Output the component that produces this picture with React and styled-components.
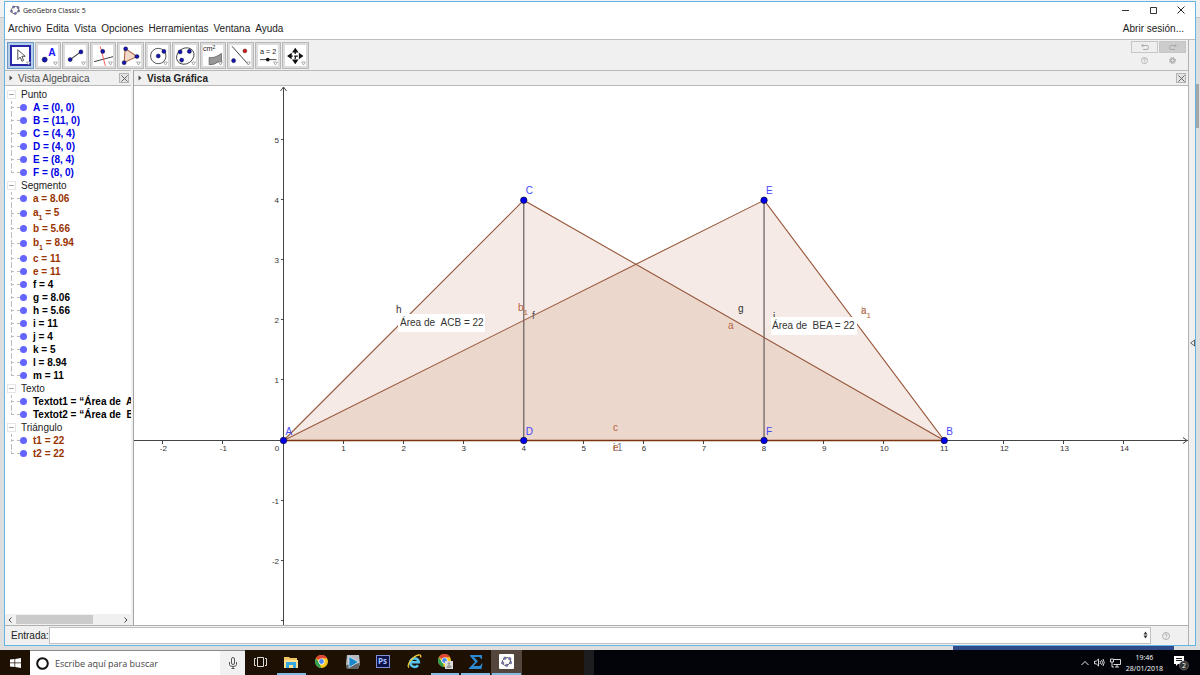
import { useState } from 'react';
import styled, { createGlobalStyle } from 'styled-components';

const sans = '"Liberation Sans", Arial, sans-serif';
const ui = '"Open Sans", "Noto Sans", sans-serif';
const BROWN = '#993300';
const BLUE = '#0000e6';

const GlobalStyle = createGlobalStyle`
  * { box-sizing: border-box; }
  body { margin: 0; font-family: ${sans}; font-size: 10px; color: #222; }
  button, input { font: inherit; color: inherit; }
  button { padding: 0; border: 0; background: none; cursor: pointer; }
  svg { display: block; }
  ul { list-style: none; margin: 0; padding: 0; }
`;

const groups = [
  { name: 'Punto', color: BLUE, items: ['A = (0, 0)', 'B = (11, 0)', 'C = (4, 4)', 'D = (4, 0)', 'E = (8, 4)', 'F = (8, 0)'] },
  {
    name: 'Segmento',
    color: '#000',
    items: [
      { text: 'a = 8.06', color: BROWN },
      { text: 'a', sub: '1', rest: ' = 5', color: BROWN },
      { text: 'b = 5.66', color: BROWN },
      { text: 'b', sub: '1', rest: ' = 8.94', color: BROWN },
      { text: 'c = 11', color: BROWN },
      { text: 'e = 11', color: BROWN },
      'f = 4', 'g = 8.06', 'h = 5.66', 'i = 11', 'j = 4', 'k = 5', 'l = 8.94', 'm = 11',
    ],
  },
  { name: 'Texto', color: '#000', items: ['Textot1 = “Área de  ACB = 22”', 'Textot2 = “Área de  BEA = 22”'] },
  { name: 'Triángulo', color: BROWN, items: ['t1 = 22', 't2 = 22'] },
];

const dot = (x, y, r = 2, fill = '#1414b4') => <circle cx={x} cy={y} r={r} fill={fill} stroke="#111" strokeWidth=".4" />;

const tools = [
  { name: 'Elige y mueve', icon: <path d="M7 3v12l3-3 2 5 2-1-2-5h4z" fill="#fff" stroke="#333" strokeWidth="1" /> },
  { name: 'Punto', icon: <>{dot(6.5, 14, 2.5)}<text x="10" y="10.5" fontSize="10" fontWeight="bold" fill="#1414ff">A</text></> },
  { name: 'Recta', icon: <><path d="M5 14L16 6" stroke="#333" />{dot(5, 14)}{dot(15.5, 6.5)}</> },
  { name: 'Perpendicular', icon: <><path d="M1 16l19-5" stroke="#333" strokeWidth=".9" /><path d="M7 1l5 19" stroke="#ff5050" strokeWidth=".9" />{dot(9.5, 6)}</> },
  { name: 'Polígono', icon: <><path d="M5 3l11.5 8L4 17z" fill="#f2d8c8" stroke="#a86242" />{dot(5.5, 3.5)}{dot(16.5, 11)}{dot(4, 17)}</> },
  { name: 'Circunferencia', icon: <><circle cx="10" cy="10.5" r="7.5" fill="none" stroke="#333" strokeWidth=".8" />{dot(10, 10.5)}{dot(15.5, 6)}</> },
  { name: 'Cónica', icon: <><ellipse cx="10" cy="10.5" rx="9" ry="7.5" transform="rotate(-35 10 10.5)" fill="none" stroke="#333" strokeWidth=".8" />{dot(5, 6.5)}{dot(14, 6)}{dot(6.5, 14.5)}</> },
  { name: 'Área', icon: <><path d="M6 19v-7q5 1 12-4v10l-3-2q-3 3-9 3z" fill="#999" stroke="#555" strokeWidth=".7" /><text x="0" y="6" fontSize="7" fill="#222">cm<tspan dy="-2" fontSize="5">2</tspan></text></> },
  { name: 'Simetría', icon: <><path d="M2 1l16 18" stroke="#333" strokeWidth=".9" />{dot(14.5, 5.5, 1.9, '#e01010')}{dot(3.5, 15)}</> },
  { name: 'Deslizador', icon: <><text x="2" y="9" fontSize="7" fill="#222">a = 2</text><path d="M2 14h16" stroke="#555" /><circle cx="9.5" cy="14" r="1.8" fill="#111" /></> },
  { name: 'Desplaza', icon: <><path d="M10 5v11M4 10.5h12" stroke="#111" strokeWidth="1.2" strokeDasharray="3.5 1.5" /><path d="M10 2.500l-3.200 4.500h6.400zM10 18.500l-3.200-4.500h6.400zM2 10.500l4.500-3.200v6.400zM18 10.500l-4.500-3.200v6.400z" fill="#111" /></> },
];

const Page = styled.div`
  display: flex;
  flex-direction: column;
  height: 100vh;
  overflow: hidden;
`;

const Desktop = styled.div`
  position: relative;
  display: flex;
  flex: 1;
  min-height: 0;
  padding: 1px 4px 4px;
  background: linear-gradient(#f1f1f1 17px, #c4c4c4 17px, #c4c4c4 18px, #dedede 18px);
`;

const BackScroll = styled.span`
  position: absolute;
  right: 1px;
  top: 84px;
  width: 3px;
  height: 44px;
  background: #a6a6a6;
`;

const BackPage = styled.span`
  position: absolute;
  right: 26px;
  bottom: 0;
  width: 221px;
  height: 5px;
  background: #304b88;
`;

const Window = styled.div`
  position: relative;
  display: flex;
  flex-direction: column;
  flex: 1;
  min-width: 0;
  border: 1px solid #64b4e4;
  background: #fff;
`;

const TitleBar = styled.header`
  display: flex;
  align-items: center;
  height: 16px;
  padding: 0 10px 0 5px;
  gap: 3px;
  font: 7px ${ui};
  color: #222;
`;

const WindowControls = styled.div`
  display: flex;
  gap: 19px;
  margin-left: auto;
`;

const MenuBar = styled.nav`
  display: flex;
  align-items: center;
  height: 21px;
  padding: 0 11px 0 3px;
  gap: 5px;
`;

const MenuLink = styled.a`
  color: #222;
  text-decoration: none;
  margin-left: ${(p) => (p.$end ? 'auto' : '0')};
`;

const Body = styled.div`
  display: flex;
  flex: 1;
  min-height: 0;
  border-top: 1px solid #bcbcbc;
`;

const Main = styled.main`
  display: flex;
  flex-direction: column;
  flex: 1;
  min-width: 0;
`;

const Strip = styled.aside`
  display: flex;
  align-items: center;
  justify-content: center;
  width: 7px;
  border-left: 1px solid #b0b0b0;
  background: #f0f0f0;
`;

const ToolBar = styled.div`
  display: flex;
  justify-content: space-between;
  height: 30px;
  padding: 1px 2px 0;
  background: #f0f0f0;
`;

const Tools = styled.div`
  display: grid;
  grid-template-columns: repeat(11, 1fr);
  gap: 1px;
  width: 302px;
  height: 27px;
  margin-top: 1px;
`;

const ToolButton = styled.button`
  position: relative;
  padding: 2px;
  border: 1px solid ${(p) => (p.$active ? '#6a96c8' : '#b8b8b8')};
  background: ${(p) => (p.$active ? '#b4cfea' : '#dcdcdc')};
  > svg {
    width: 100%;
    height: 100%;
    background: #fff;
    border: ${(p) => (p.$active ? '2px solid #2828a8' : '0')};
  }
`;

const Corner = styled.i`
  position: absolute;
  right: 2px;
  bottom: 2px;
  svg { width: 5px; height: 5px; }
`;

const History = styled.div`
  display: grid;
  grid-template-columns: 27px 27px;
  grid-template-rows: 12px 12px;
  gap: 1px;
  justify-items: center;
  align-items: center;
  align-content: start;
`;

const HistoryButton = styled.button`
  display: grid;
  place-items: center;
  width: 100%;
  height: 100%;
  border: 1px solid #c6c6c6;
  background: ${(p) => (p.$dark ? '#cccccc' : '#eeeeee')};
`;

const Views = styled.div`
  display: flex;
  flex: 1;
  min-height: 0;
`;

const Panel = styled.section`
  display: flex;
  flex-direction: column;
  flex: ${(p) => (p.$width ? `0 0 ${p.$width}` : '1')};
  min-width: 0;
  border-left: ${(p) => (p.$width ? '0' : '1px solid #a4a4a4')};
  border-right: ${(p) => (p.$width ? '2px solid #f0f0f0' : '0')};
`;

const PanelHead = styled.div`
  display: flex;
  align-items: center;
  gap: 5px;
  height: 16px;
  padding: 0 2px 0 4px;
  border-top: 1px solid #b8b8b8;
  border-bottom: 1px solid #b8b8b8;
  background: #f0f0f0;
  color: ${(p) => (p.$active ? '#222' : '#505050')};
  font-weight: ${(p) => (p.$active ? 'bold' : 'normal')};
`;

const CloseButton = styled.button`
  display: grid;
  place-items: center;
  width: 10px;
  height: 10px;
  margin-left: auto;
  border: 1px solid #b4b4b4;
  background: #e4e4e4;
`;

const Tree = styled.div`
  flex: 1;
  min-height: 0;
  padding-top: 2px;
  overflow: hidden;
`;

const GroupHead = styled.div`
  display: flex;
  align-items: center;
  gap: 5px;
  height: 13px;
  padding-left: 2px;
`;

const Toggle = styled.button`
  display: grid;
  place-items: center;
  width: 9px;
  height: 9px;
  border: 1px solid #e6e6e6;
  background: #fff;
  &::before {
    content: '';
    width: 5px;
    height: 1px;
    background: #aaa;
  }
`;

const Item = styled.li`
  position: relative;
  display: flex;
  align-items: center;
  height: ${(p) => (p.$tall ? '17px' : '13px')};
  margin-left: 6px;
  color: ${(p) => p.$color};
  font-weight: bold;
  white-space: pre;
  &::before {
    content: '';
    position: absolute;
    left: 0;
    top: 0;
    height: 100%;
    border-left: 1px dashed #bbb;
  }
  &:last-child::before { height: 50%; }
`;

const Branch = styled.span`
  flex: none;
  width: 9px;
  border-top: 1px dashed #bbb;
`;

const Marker = styled.button`
  flex: none;
  width: 7px;
  height: 7px;
  margin-right: 6px;
  border-radius: 50%;
  background: #6464ff;
`;

const Sub = styled.sub`
  font-size: 7px;
  line-height: 1;
  vertical-align: -4px;
`;

const ScrollBar = styled.div`
  display: flex;
  align-items: center;
  justify-content: space-between;
  height: 11px;
  padding: 0 3px;
  background: #f0f0f0;
`;

const Thumb = styled.span`
  width: 77px;
  height: 9px;
  margin: 0 auto 0 4px;
  background: #cbcbcb;
`;

const Graph = styled.svg`
  flex: 1;
  width: 100%;
  min-height: 0;
  background: #fff;
  font-family: ${sans};
`;

const InputBar = styled.form`
  display: flex;
  align-items: center;
  height: 20px;
  padding: 0 18px 0 6px;
  border-top: 1px solid #b0b0b0;
  background: #f0f0f0;
`;

const Field = styled.div`
  position: relative;
  display: flex;
  flex: 1;
  margin-right: 11px;
  input {
    flex: 1;
    height: 17px;
    padding: 0 16px 0 3px;
    border: 1px solid #c0c0c0;
    background: #fff;
    outline: none;
  }
  button {
    position: absolute;
    right: 3px;
    top: 4px;
  }
`;

const TaskBar = styled.footer`
  display: flex;
  height: 25px;
  background: #02040a;
  color: #fff;
  font-family: ${ui};
`;

const StartButton = styled.button`
  display: grid;
  place-items: center;
  width: 30px;
  background: #1e1002;
`;

const Search = styled.label`
  display: flex;
  align-items: center;
  gap: 6px;
  width: 190px;
  padding-left: 6px;
  border-top: 1px solid #888;
  background: #fff;
  input {
    flex: 1;
    min-width: 0;
    padding: 0;
    border: 0;
    background: none;
    outline: none;
    color: #444;
    font-size: 9px;
    &::placeholder { color: #444; opacity: 1; }
  }
`;

const MicButton = styled.button`
  display: grid;
  place-items: center;
  width: 25px;
  border-top: 1px solid #888;
  background: #f1f1f1;
`;

const Apps = styled.div`
  display: grid;
  grid-template-columns: repeat(9, 1fr);
  width: 277px;
  background: #1e1002;
`;

const AppButton = styled.button`
  display: grid;
  place-items: center;
  border-bottom: 2px solid transparent;
  background: ${(p) => (p.$active ? '#54463c' : 'none')};
  background-clip: border-box;
  border-image: ${(p) => (p.$open ? 'linear-gradient(90deg, transparent 8%, #84bce4 8%, #84bce4 92%, transparent 92%) 2' : 'none')};
`;

const Empty = styled.div`
  width: 72px;
  border-right: 10px solid #1d1d1f;
  background: #1e1002;
`;

const Tray = styled.div`
  display: flex;
  align-items: center;
  margin-left: auto;
  padding-right: 11px;
  gap: 5px;
`;

const Clock = styled.time`
  font-size: 7px;
  line-height: 11px;
  text-align: center;
`;

const Notices = styled.button`
  margin-left: 5px;
`;

const UNIT = 60.07;
const px = (x) => 149.5 + x * UNIT;
const py = (y) => 354.5 - y * UNIT;
const pt = (x, y) => `${px(x)},${py(y)}`;

const labels = [
  { t: 'h', x: 262, y: 227, c: '#333' },
  { t: 'b', sub: '1', x: 384, y: 225 },
  { t: 'f', x: 398, y: 233, c: '#555' },
  { t: 'g', x: 604, y: 226, c: '#333' },
  { t: 'a', x: 594, y: 243 },
  { t: 'j', x: 639, y: 234, c: '#333' },
  { t: 'k', x: 727, y: 228, c: '#ccc' },
  { t: 'a', sub: '1', x: 727, y: 228 },
  { t: 'c', x: 479, y: 345 },
  { t: 'i', x: 479, y: 365, c: '#555' },
  { t: '1', x: 483, y: 365, c: '#777' },
  { t: 'e', x: 479, y: 365 },
];

const points = [
  ['A', 0, 0], ['B', 11, 0], ['C', 4, 4], ['D', 4, 0], ['E', 8, 4], ['F', 8, 0],
];

function GraphView() {
  const xs = Array.from({ length: 17 }, (_, i) => i - 2);
  const ys = [-3, -2, -1, 1, 2, 3, 4, 5];
  return (
    <Graph viewBox="0 0 1054 539" preserveAspectRatio="xMinYMin slice" role="img" aria-label="Vista Gráfica">
      <g stroke="#444" strokeWidth="1" fill="none">
        <path d="M0 354.500H1054M149.500 1V539M146.500 5l3-4 3 4M1049 351.500l4 3-4 3" />
        {xs.map((x) => <path key={x} d={`M${Math.round(px(x)) - 0.5} 355v3`} />)}
        {ys.map((y) => <path key={y} d={`M147 ${Math.round(py(y)) - 0.5}h3`} />)}
      </g>
      <g fontSize="8" fill="#333">
        {xs.map((x) => (
          <text key={x} x={x === 0 ? 143 : px(x)} y="365" textAnchor="middle">{x}</text>
        ))}
        {ys.slice(1).map((y) => (
          <text key={y} x="145" y={py(y) + 3} textAnchor="end">{y}</text>
        ))}
      </g>
      <g fill={BROWN} fillOpacity=".1">
        <polygon points={`${pt(0, 0)} ${pt(4, 4)} ${pt(11, 0)}`} />
        <polygon points={`${pt(0, 0)} ${pt(8, 4)} ${pt(11, 0)}`} />
      </g>
      <path d={`M${pt(4, 4)}V354M${px(8)},${py(4)}V354`} stroke="#665e5c" strokeWidth="1.2" />
      <g fill="none" stroke="#96563a" strokeWidth="1.1">
        <polygon points={`${pt(0, 0)} ${pt(4, 4)} ${pt(11, 0)}`} />
        <polygon points={`${pt(0, 0)} ${pt(8, 4)} ${pt(11, 0)}`} />
      </g>
      <path d={`M${pt(0, 0)}H${px(11)}`} stroke="#7a3410" strokeWidth="1.5" />
      <g fontSize="10">
        {labels.map((l, i) => (
          <text key={i} x={l.x} y={l.y} fill={l.c || '#b8623c'}>
            {l.t}
            {l.sub && <tspan fontSize="8" dy="4">{l.sub}</tspan>}
          </text>
        ))}
      </g>
      {points.map(([name, x, y]) => (
        <g key={name}>
          <circle cx={px(x)} cy={py(y)} r="3.200" fill="#0000f0" stroke="#111144" strokeWidth=".8" />
          <text x={px(x) + 2} y={py(y) - 6} fontSize="10" fill="#4646ff">{name}</text>
        </g>
      ))}
      <rect x="264" y="228" width="87" height="18" fill="#fff" />
      <text x="266" y="240" fontSize="10" fill="#333" xmlSpace="preserve">{'Área de \u00a0ACB = 22'}</text>
      <rect x="637" y="231" width="86" height="18" fill="#fff" />
      <text x="638" y="243" fontSize="10" fill="#333" xmlSpace="preserve">{'Área de \u00a0BEA = 22'}</text>
    </Graph>
  );
}

const Arrow = () => <svg width="4" height="6"><path d="M.500.500l3 2.500-3 2.500z" fill="#444" /></svg>;
const Cross = ({ size = 7, color = '#555' }) => (
  <svg width={size} height={size} viewBox="0 0 8 8"><path d="M.5.5l7 7M7.500.5l-7 7" stroke={color} strokeWidth="1" /></svg>
);
const Help = ({ size = 8 }) => (
  <svg width={size} height={size} viewBox="0 0 10 10" fill="none" stroke="#999" strokeWidth=".9">
    <circle cx="5" cy="5" r="4.400" /><path d="M3.600 4q0-1.500 1.400-1.500T6.400 4Q6.400 4.700 5 5.300V6M5 7v1" />
  </svg>
);
const Logo = ({ size = 10 }) => (
  <svg width={size} height={size} viewBox="0 0 20 20">
    <ellipse cx="10" cy="10" rx="8" ry="6.500" transform="rotate(-25 10 10)" fill="none" stroke="#555" strokeWidth="1.500" />
    <g fill="#8080e0" stroke="#333" strokeWidth=".8">
      <circle cx="7" cy="4" r="2.200" /><circle cx="16" cy="5" r="2.200" /><circle cx="17.500" cy="12" r="2.200" /><circle cx="10.500" cy="17" r="2.200" /><circle cx="3" cy="12.500" r="2.200" />
    </g>
  </svg>
);
const Chrome = ({ badge }) => (
  <svg width="17" height="17" viewBox="0 0 17 17">
    <g transform={badge ? 'translate(-1 -1)' : undefined}>
      <circle cx="8.500" cy="8.500" r="6.500" fill="#f8c820" />
      <path d="M8.500 8.500L2.900 5.200A6.500 6.500 0 0 1 14.100 5.200H8.500z" fill="#e04434" />
      <path d="M2.900 5.200l4 6 1.200 3.780A6.500 6.500 0 0 1 2.900 5.200z" fill="#30a050" />
      <circle cx="8.500" cy="8.500" r="3.100" fill="#fff" /><circle cx="8.500" cy="8.500" r="2.400" fill="#4888f0" />
    </g>
    {badge && <><path d="M8 8h8v8H8z" fill="#ddd" /><circle cx="12" cy="10.500" r="1.300" fill="#999" /><path d="M9.500 15q0-3 2.500-3t2.500 3z" fill="#999" /></>}
  </svg>
);

const apps = [
  { name: 'Vista de tareas', icon: <svg width="13" height="10" fill="none" stroke="#ddd"><path d="M3.500.5h6v9h-6zM2 1.500H.5v7H2M11 1.500h1.500v7H11" /></svg> },
  { name: 'Explorador', open: true, icon: <svg width="14" height="12"><path d="M0 1h5l1 1h7v10H0z" fill="#f0c860" /><path d="M0 4h14v8H0z" fill="#fce090" /><path d="M2 12V6h10v6H9V9H5v3z" fill="#38a8e0" /></svg> },
  { name: 'Chrome', icon: <Chrome /> },
  { name: 'Reproductor', icon: <svg width="14" height="14"><path d="M1 0h12l1 9-2 5H1L0 9z" fill="#b8bcc0" /><path d="M0 10l14-2-2 6H1z" fill="#666" /><path d="M3 1.500l9.500 5.500L3 12.500z" fill="#1888c8" stroke="#e8f4fc" strokeWidth=".7" /></svg> },
  { name: 'Photoshop', icon: <svg width="14" height="13"><rect x=".5" y=".5" width="13" height="12" fill="#0c1248" stroke="#8090d0" /><text x="2" y="9" fontSize="8" fontWeight="bold" fill="#a8c0ff">Ps</text></svg> },
  { name: 'Internet Explorer', icon: <svg width="15" height="15" fill="none"><path d="M3.500 8.200h8.300A4.300 4.300 0 1 0 11 11.200" stroke="#58c4f0" strokeWidth="2.600" /><path d="M2 13.500C-1 11 6 2 11.500 1q3-.5 2 2.500" stroke="#f4cc30" strokeWidth="1.300" /></svg> },
  { name: 'Chrome perfil', open: true, icon: <Chrome badge /> },
  { name: 'Editor', open: true, icon: <svg width="14" height="15"><path d="M1 1h12v4h-1q-.5-2-2-2H5l4 4.200L4.500 12H10q2 0 2.500-2.500h1L12.500 15H0v-1l6-6-5-6z" fill="#2c88d0" /></svg> },
  { name: 'GeoGebra', open: true, active: true, icon: <svg width="15" height="15"><rect width="15" height="15" rx="1" fill="#fff" /><g transform="translate(2 2)"><Logo size={11} /></g></svg> },
];

function TreeItem({ item, color }) {
  const data = typeof item === 'string' ? { text: item } : item;
  return (
    <Item $color={data.color || color} $tall={!!data.sub}>
      <Branch />
      <Marker type="button" aria-label={`Mostrar ${data.text}`} />
      <span>{data.text}{data.sub && <Sub>{data.sub}</Sub>}{data.rest}</span>
    </Item>
  );
}

function App() {
  const [tool, setTool] = useState(0);
  const [closed, setClosed] = useState({});
  const [entry, setEntry] = useState('');

  return (
    <Page>
      <GlobalStyle />
      <Desktop>
        <BackScroll />
        <BackPage />
        <Window>
          <TitleBar>
            <Logo />
            <span>GeoGebra Classic 5</span>
            <WindowControls>
              <button type="button" aria-label="Minimizar"><svg width="9" height="8"><path d="M1 4.500h7" stroke="#333" /></svg></button>
              <button type="button" aria-label="Maximizar"><svg width="9" height="8"><path d="M1.500 1.500h6v6h-6z" fill="none" stroke="#333" /></svg></button>
              <button type="button" aria-label="Cerrar"><Cross size={8} color="#222" /></button>
            </WindowControls>
          </TitleBar>
          <MenuBar>
            {['Archivo', 'Edita', 'Vista', 'Opciones', 'Herramientas', 'Ventana', 'Ayuda'].map((m) => (
              <MenuLink key={m} href="#">{m}</MenuLink>
            ))}
            <MenuLink href="#" $end>Abrir sesión...</MenuLink>
          </MenuBar>
          <Body>
            <Main>
              <ToolBar>
                <Tools>
                  {tools.map((t, i) => (
                    <ToolButton key={t.name} type="button" aria-label={t.name} $active={tool === i} onClick={() => setTool(i)}>
                      <svg viewBox="0 0 20 20" fill="none">{t.icon}</svg>
                      <Corner><svg viewBox="0 0 6 5"><path d="M.7.700h4.600L3 4.300z" fill="#fff" stroke="#888" strokeWidth=".8" /></svg></Corner>
                    </ToolButton>
                  ))}
                </Tools>
                <History>
                  <HistoryButton type="button" aria-label="Deshace"><svg width="8" height="6" fill="none" stroke="#aaa"><path d="M2.500 0L.7 1.500l1.800 1.500M.7 1.500H6q1.500 0 1.500 2T6 5.500H2" /></svg></HistoryButton>
                  <HistoryButton type="button" aria-label="Rehace" $dark><svg width="8" height="6" fill="none" stroke="#aaa"><path d="M5.500 0l1.800 1.500-1.800 1.500M7.300 1.500H2Q.5 1.500.5 3.500T2 5.500h4" /></svg></HistoryButton>
                  <button type="button" aria-label="Ayuda"><Help size={7} /></button>
                  <button type="button" aria-label="Ajustes"><svg width="7" height="7" viewBox="0 0 8 8" fill="none" stroke="#999"><circle cx="4" cy="4" r="2" strokeWidth="1.300" /><circle cx="4" cy="4" r="3.300" strokeWidth="1.200" strokeDasharray="1.300 1.290" /></svg></button>
                </History>
              </ToolBar>
              <Views>
                <Panel $width="128px">
                  <PanelHead>
                    <Arrow />
                    <span>Vista Algebraica</span>
                    <CloseButton type="button" aria-label="Cerrar vista"><Cross /></CloseButton>
                  </PanelHead>
                  <Tree>
                    {groups.map((g) => (
                      <section key={g.name}>
                        <GroupHead>
                          <Toggle type="button" aria-label={g.name} onClick={() => setClosed({ ...closed, [g.name]: !closed[g.name] })} />
                          <span>{g.name}</span>
                        </GroupHead>
                        {!closed[g.name] && (
                          <ul>{g.items.map((item, i) => <TreeItem key={i} item={item} color={g.color} />)}</ul>
                        )}
                      </section>
                    ))}
                  </Tree>
                  <ScrollBar>
                    <svg width="4" height="6" fill="none" stroke="#444"><path d="M3.500.5L1 3l2.500 2.500" /></svg>
                    <Thumb />
                    <svg width="4" height="6" fill="none" stroke="#444"><path d="M.5.5L3 3 .5 5.500" /></svg>
                  </ScrollBar>
                </Panel>
                <Panel>
                  <PanelHead $active>
                    <Arrow />
                    <span>Vista Gráfica</span>
                    <CloseButton type="button" aria-label="Cerrar vista"><Cross /></CloseButton>
                  </PanelHead>
                  <GraphView />
                </Panel>
              </Views>
              <InputBar onSubmit={(e) => e.preventDefault()}>
                <label htmlFor="entrada">Entrada:</label>
                <Field>
                  <input id="entrada" value={entry} onChange={(e) => setEntry(e.target.value)} />
                  <button type="button" aria-label="Historial"><svg width="5" height="8"><path d="M2.500.500L4.500 3.400h-4zM2.500 7.500L.500 4.600h4z" fill="#333" /></svg></button>
                </Field>
                <button type="button" aria-label="Ayuda de entrada"><Help /></button>
              </InputBar>
            </Main>
            <Strip><svg width="5" height="8" fill="none" stroke="#555" strokeWidth=".9"><path d="M4.500 1v6L.7 4z" /></svg></Strip>
          </Body>
        </Window>
      </Desktop>
      <TaskBar>
        <StartButton type="button" aria-label="Inicio">
          <svg width="11" height="10" fill="#fff"><path d="M0 1.500L4.500 1v3.600H0zM5.200.900L11 0v4.600H5.200zM0 5.300h4.500v3.600L0 8.400zM5.200 5.300H11V10l-5.800-.9z" /></svg>
        </StartButton>
        <Search>
          <svg width="13" height="13"><circle cx="6.500" cy="6.500" r="5.300" fill="none" stroke="#111" strokeWidth="2" /></svg>
          <input aria-label="Buscar" placeholder="Escribe aquí para buscar" />
        </Search>
        <MicButton type="button" aria-label="Voz">
          <svg width="8" height="12" fill="none" stroke="#555"><rect x="2.500" y=".5" width="3" height="7" rx="1.500" /><path d="M.5 5v2.500q0 2 3.500 2t3.500-2V5M4 9.500V12M2.500 11.500h3" /></svg>
        </MicButton>
        <Apps>
          {apps.map((a) => (
            <AppButton key={a.name} type="button" aria-label={a.name} $open={a.open} $active={a.active}>{a.icon}</AppButton>
          ))}
        </Apps>
        <Empty />
        <Tray>
          <svg width="8" height="6" fill="none" stroke="#eee"><path d="M.5 5L4 1.500 7.500 5" /></svg>
          <svg width="11" height="9" fill="none" stroke="#eee" strokeWidth=".9"><path d="M.5 3.200h1.700L4.500 1v7L2.200 5.800H.5zM6 3q1 1.500 0 3M7.500 2q2 2.500 0 5M9 1q2.500 3.500 0 7" /></svg>
          <svg width="11" height="10" fill="none" stroke="#eee" strokeWidth=".9"><path d="M4 1.500h6.500v5h-7M5 9h4M7 6.500V9M.5 1h3v3h-3zM2 4v5h2" /></svg>
          <Clock>19:46<br />28/01/2018</Clock>
          <Notices type="button" aria-label="Notificaciones">
            <svg width="16" height="16"><path d="M1 1h10v8H5l-2 2V9H1z" fill="#fff" /><path d="M3 3.500h6M3 5.500h6" stroke="#222" /><circle cx="11" cy="10.500" r="4.500" fill="#333" stroke="#777" strokeWidth=".7" /><text x="9" y="13" fontSize="7" fill="#fff">2</text></svg>
          </Notices>
        </Tray>
      </TaskBar>
    </Page>
  );
}

export default App;
